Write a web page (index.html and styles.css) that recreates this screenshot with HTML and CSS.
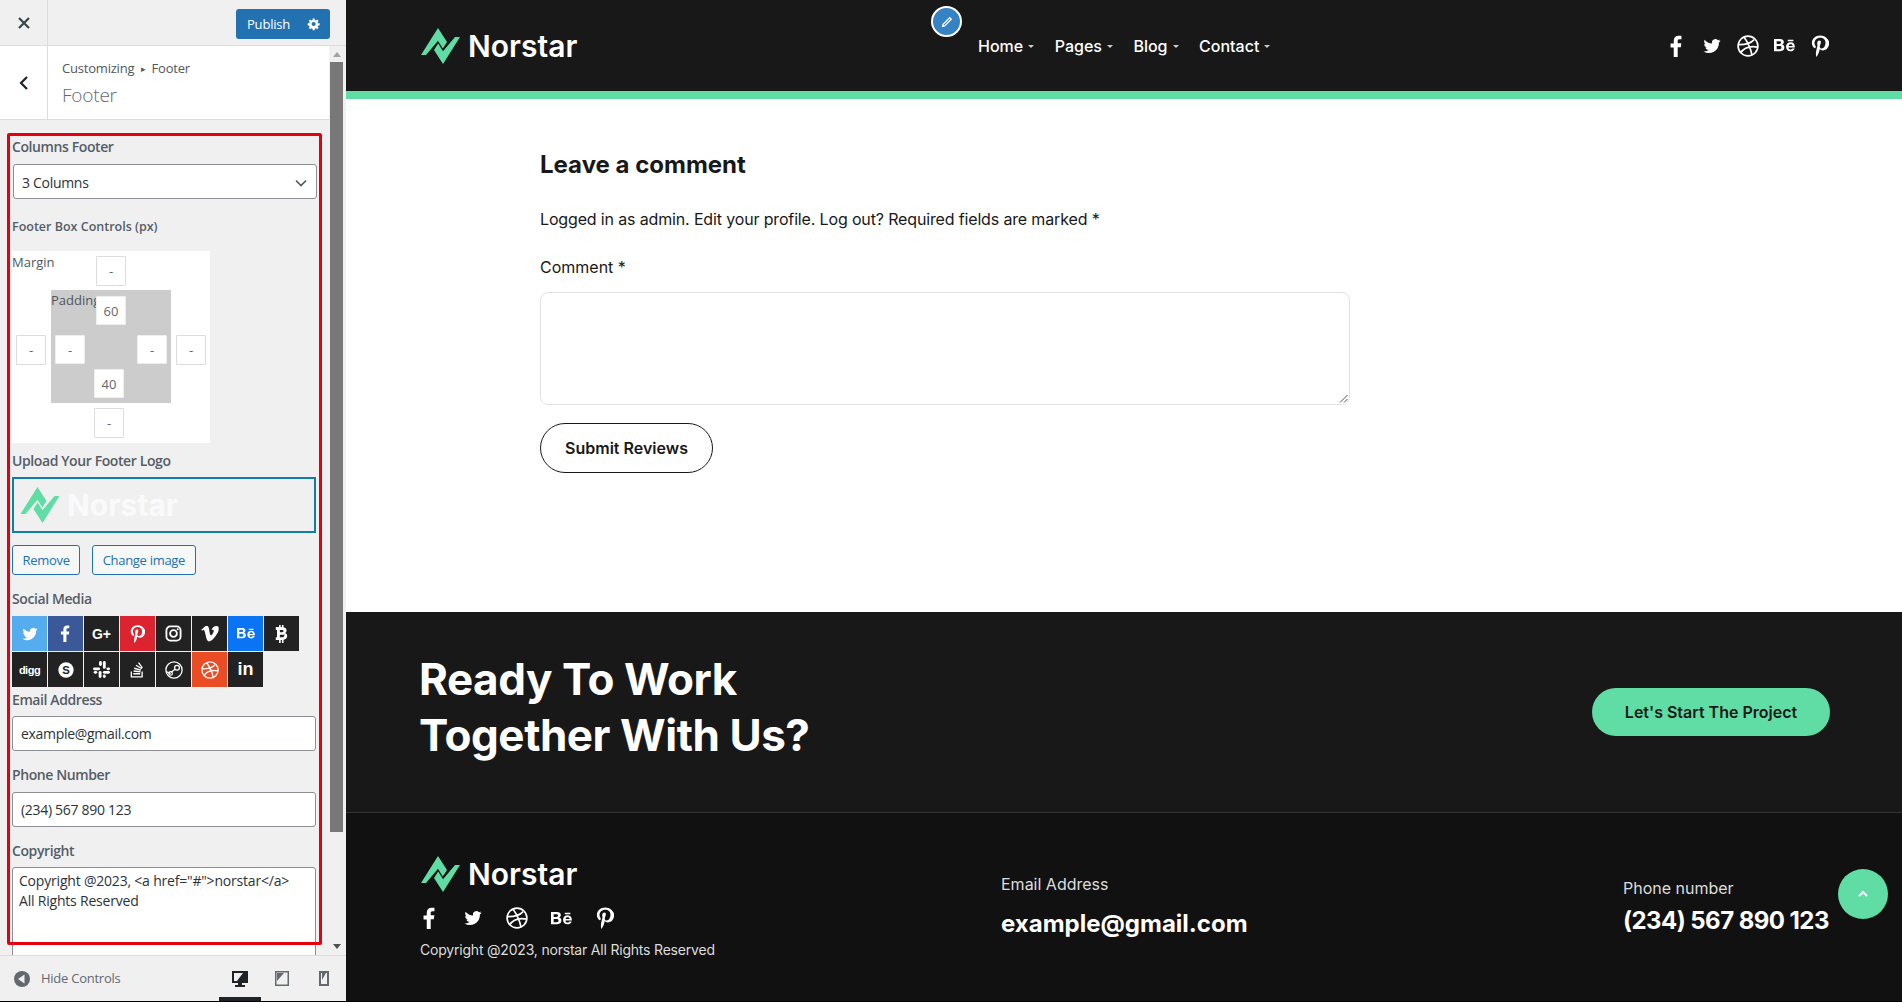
FILE: index.html
```html
<!DOCTYPE html>
<html lang="en">
<head>
<meta charset="utf-8">
<title>Customizing Footer</title>
<link rel="stylesheet" href="styles.css">
</head>
<body>
<svg class="defs" width="0" height="0" aria-hidden="true">
  <defs>
    <symbol id="i-logo" viewBox="0 0 39 36">
      <path fill="#5fdda5" d="M0 27 17 0l9 14-4.200 6.500-4.800-7.700L5 27z"/>
      <path fill="#5fdda5" d="M39 9 22 36l-9-14 4.200-6.500 4.800 7.700L34 9z"/>
    </symbol>
    <symbol id="i-fb" viewBox="0 0 20 24"><path d="M7 24V13.500H3.500V9.300H7V6.200C7 2.500 9.200.8 12.300.8c1.500 0 2.700.1 3.100.2v3.700h-2.100c-1.700 0-2 .8-2 2v2.400h4l-.6 4.200h-3.400V24z"/></symbol>
    <symbol id="i-tw" viewBox="0 0 24 24"><path d="M23.500 5c-.8.4-1.700.6-2.700.8 1-.6 1.700-1.500 2.100-2.600-.9.5-1.900.9-3 1.100A4.700 4.700 0 0 0 11.900 8.600C8 8.400 4.500 6.500 2.200 3.600c-1.200 2.100-.6 4.800 1.400 6.200-.8 0-1.500-.2-2.100-.6 0 2.300 1.600 4.200 3.800 4.700-.7.200-1.400.2-2.100.1.600 1.900 2.300 3.200 4.400 3.300A9.500 9.500 0 0 1 .6 19.200 13.400 13.400 0 0 0 21.200 7.300c.9-.6 1.700-1.400 2.300-2.300z"/></symbol>
    <symbol id="i-dr" viewBox="0 0 24 24"><g fill="none" stroke="currentColor" stroke-width="1.800"><circle cx="12" cy="12" r="10.800"/><path d="M7.500 2.300c3.500 4.600 7 11 9 20M1.400 10.500c6.500.2 13-.8 17.300-5.500M3.800 19.700c3.400-5.500 9-8.400 19-6.500"/></g></symbol>
    <symbol id="i-be" viewBox="0 0 26 18"><path fill-rule="evenodd" d="M0 1h7.400c3 0 4.800 1.400 4.800 3.800 0 1.500-.8 2.600-2 3.100 1.700.5 2.700 1.800 2.700 3.700 0 2.800-2.100 4.400-5.200 4.400H0zm3.300 2.700v3.300h3.500c1.200 0 1.900-.6 1.900-1.700S8 3.700 6.800 3.700zm0 5.800v4.100h3.800c1.400 0 2.200-.8 2.200-2.100s-.8-2-2.200-2zM17 2h7v1.600h-7zm3.700 3c3.500 0 5.300 2.600 5.100 6.400H17.900c.1 1.700 1 2.600 2.600 2.600 1.100 0 1.900-.5 2.200-1.300h2.900c-.7 2.200-2.600 3.500-5.100 3.500-3.500 0-5.600-2.300-5.600-5.600S17.200 5 20.700 5zm0 2.300c-1.500 0-2.500.8-2.700 2.300h5.100c-.1-1.500-1-2.300-2.400-2.300z"/></symbol>
    <symbol id="i-pi" viewBox="0 0 20 24"><path d="M10.400.3C4.700.3 1 4 1 8.600c0 2.500 1.400 5 3.200 5.900.5.200.7-.1.800-.5l.3-1.200c0-.3 0-.5-.2-.8-.7-.9-1.200-2.100-1.200-3.400 0-3.200 2.600-5.900 6.300-5.900 3.600 0 5.900 2.300 5.900 5.500 0 3.600-1.700 6.600-4.200 6.600-1.400 0-2.400-1.100-2.100-2.500.4-1.600 1.200-3.300 1.200-4.400 0-1-.6-1.900-1.700-1.900-1.300 0-2.400 1.400-2.400 3.200 0 1.200.4 2 .4 2s-1.400 5.700-1.600 6.800c-.5 2-.1 4.600 0 5.600.1.300.4.300.6.100.2-.3 2-2.600 2.600-5l.9-3.400c.5.900 1.800 1.600 3.300 1.600 4.300 0 7.200-3.900 7.200-9.200C19 3.900 15.400.3 10.400.3z"/></symbol>
  </defs>
</svg>

<aside class="sidebar">
  <div class="topbar">
    <button class="close-btn" aria-label="Close">
      <svg width="16" height="16" viewBox="0 0 16 16"><path d="M3 3l10 10M13 3L3 13" stroke="#3c434a" stroke-width="2.200"/></svg>
    </button>
    <div class="publish">
      <span class="publish-text">Publish</span>
      <svg width="14" height="14" viewBox="0 0 20 20"><path fill="#fff" fill-rule="evenodd" d="M18 12h-2.180c-.17.7-.44 1.350-.81 1.930l1.540 1.540-2.100 2.100-1.540-1.540c-.58.36-1.230.64-1.910.81V19H8v-2.180c-.68-.17-1.330-.45-1.910-.81l-1.540 1.540-2.120-2.120 1.540-1.540c-.36-.58-.64-1.230-.81-1.890H1V9h2.180c.17-.7.45-1.350.81-1.930L2.450 5.530l2.100-2.100 1.540 1.540c.58-.37 1.230-.64 1.910-.81V2h3v2.160c.68.17 1.330.44 1.910.81l1.540-1.540 2.120 2.120-1.540 1.540c.36.58.64 1.230.81 1.910H18zM9.500 13a3 3 0 1 0 0-6 3 3 0 0 0 0 6z"/></svg>
    </div>
  </div>

  <div class="section-head">
    <button class="back-btn" aria-label="Back">
      <svg width="12" height="16" viewBox="0 0 12 16"><path d="M9 2 3 8l6 6" fill="none" stroke="#1d2327" stroke-width="2.200"/></svg>
    </button>
    <div class="section-title">
      <div class="crumb">Customizing <span class="crumb-arrow">▸</span> Footer</div>
      <div class="title">Footer</div>
    </div>
  </div>

  <div class="scroll-area">
    <div class="controls">
      <div class="label lab-columns">Columns Footer</div>
      <div class="select"><span>3 Columns</span>
        <svg width="14" height="14" viewBox="0 0 14 14"><path d="M2 4.500 7 9.500l5-5" fill="none" stroke="#50575e" stroke-width="1.600"/></svg>
      </div>
      <div class="label lab-box">Footer Box Controls (px)</div>
      <div class="box-ctl">
        <span class="box-label margin-label">Margin</span>
        <div class="pad-area"><span class="box-label padding-label">Padding</span></div>
        <span class="num m-top">-</span>
        <span class="num m-left">-</span>
        <span class="num m-right">-</span>
        <span class="num m-bottom">-</span>
        <span class="num p p-top">60</span>
        <span class="num p p-left">-</span>
        <span class="num p p-right">-</span>
        <span class="num p p-bottom">40</span>
      </div>
      <div class="label lab-upload">Upload Your Footer Logo</div>
      <div class="logo-thumb">
        <svg class="logo-mark-s" width="40" height="36"><use href="#i-logo"/></svg>
        <span class="logo-ghost">Norstar</span>
      </div>
      <div class="btn-row">
        <span class="wp-btn">Remove</span>
        <span class="wp-btn">Change image</span>
      </div>
      <div class="label lab-social">Social Media</div>
      <div class="social-grid">
        <span class="tile c-tw"><svg width="16" height="16"><use href="#i-tw"/></svg></span>
        <span class="tile c-fb"><svg width="15" height="17"><use href="#i-fb"/></svg></span>
        <span class="tile"><span class="g-plus">G+</span></span>
        <span class="tile c-pi"><svg width="15" height="18"><use href="#i-pi"/></svg></span>
        <span class="tile"><svg width="17" height="17" viewBox="0 0 24 24"><g fill="none" stroke="currentColor" stroke-width="2.600"><rect x="2" y="2" width="20" height="20" rx="5.500"/><circle cx="12" cy="12" r="4.800"/></g><circle cx="18" cy="6" r="1.500" fill="currentColor"/></svg></span>
        <span class="tile"><svg width="18" height="16" viewBox="0 0 24 22"><path d="M23.900 5.200c-.1 2.300-1.700 5.500-4.900 9.600-3.300 4.300-6 6.400-8.300 6.400-1.400 0-2.600-1.300-3.600-3.900L5.200 9.200C4.500 6.600 3.700 5.300 2.900 5.300c-.2 0-.8.400-1.900 1.100L0 5c1.200-1 2.400-2.100 3.500-3.100C5.100.5 6.300-.2 7.100-.3c1.900-.2 3 1.100 3.500 3.900.5 3 .8 4.900 1 5.600.5 2.500 1.100 3.700 1.800 3.700.5 0 1.200-.8 2.200-2.300.9-1.500 1.500-2.700 1.500-3.500.1-1.300-.4-2-1.500-2-.5 0-1.100.1-1.700.4C15.600 1.700 18 -.1 21.400 0c2.600.1 2.700 2.100 2.500 5.200z"/></svg></span>
        <span class="tile c-be"><svg width="18" height="13"><use href="#i-be"/></svg></span>
        <span class="tile"><svg width="13" height="18" viewBox="0 0 16 22"><path fill-rule="evenodd" d="M5 0h2v2.500h1.500V0h2v2.800c2.300.5 3.700 1.800 3.700 3.900 0 1.500-.7 2.600-1.900 3.200 1.700.5 2.700 1.800 2.700 3.700 0 2.600-1.700 4.100-4.500 4.500V22h-2v-3.500H7V22H5v-3.500H1V15h1.500V6H1V2.500h4zm1 6v2.800h3c1 0 1.500-.5 1.500-1.400S10 6 9 6zm0 6v3h3.400c1 0 1.600-.6 1.600-1.500S13.400 12 12.400 12z"/></svg></span>
        <span class="tile"><span class="digg">digg</span></span>
        <span class="tile"><svg width="16" height="16" viewBox="0 0 24 24"><circle cx="12" cy="12" r="11.500"/><text x="12" y="18" class="skype-s">S</text></svg></span>
        <span class="tile"><svg width="17" height="17" viewBox="0 0 24 24"><g><rect x="0" y="9" width="10" height="4" rx="2"/><rect x="8.500" y="0" width="4" height="7" rx="2"/><rect x="14" y="0" width="4" height="11" rx="2"/><rect x="19" y="9" width="5" height="4" rx="2"/><rect x="14" y="14" width="10" height="4" rx="2"/><rect x="14" y="19" width="4" height="5" rx="2"/><rect x="8" y="14" width="4" height="10" rx="2"/><rect x="1" y="14" width="5" height="4" rx="2"/></g></svg></span>
        <span class="tile"><svg width="15" height="17" viewBox="0 0 19 22"><path d="M1.500 13.500v7h14v-7" fill="none" stroke="currentColor" stroke-width="1.700"/><path d="M4 15.500h9v2H4zM4.500 12l9 1-.2 1.800-9-1zM5.500 8.500l8.700 2.500-.5 1.700L5 10.200zM8 4.800l7.600 4.500-.9 1.500L7.100 6.300zM11.500 1.500l5 7-1.400 1-5-7z"/></svg></span>
        <span class="tile"><svg width="18" height="18" viewBox="0 0 24 24"><g fill="none" stroke="currentColor" stroke-width="1.700"><circle cx="12" cy="12" r="10.800"/><circle cx="16" cy="9" r="3.200"/><path d="M1.500 14l6 2.800M8 15l5.500-4"/></g><circle cx="7.500" cy="16.500" r="2.400" fill="none" stroke="currentColor" stroke-width="1.500"/></svg></span>
        <span class="tile c-dr"><svg width="18" height="18"><use href="#i-dr"/></svg></span>
        <span class="tile"><span class="in">in</span></span>
      </div>
      <div class="label lab-email">Email Address</div>
      <div class="input">example@gmail.com</div>
      <div class="label lab-phone">Phone Number</div>
      <div class="input">(234) 567 890 123</div>
      <div class="label lab-copy">Copyright</div>
      <div class="textarea">Copyright @2023, &lt;a href="#"&gt;norstar&lt;/a&gt;<br>All Rights Reserved</div>
    </div>
  </div>
  <div class="scrollbar">
    <span class="arrow-up"></span>
    <span class="thumb"></span>
    <span class="arrow-down"></span>
  </div>
  <div class="red-outline"></div>

  <div class="bottombar">
    <span class="collapse-ico"><svg width="16" height="16" viewBox="0 0 16 16"><circle cx="8" cy="8" r="8" fill="#646970"/><path d="M10.500 3.500v9L4 8z" fill="#f0f0f1"/></svg></span>
    <span class="hide-text">Hide Controls</span>
    <span class="devices">
      <span class="device active"><svg width="18" height="18" viewBox="0 0 18 18"><path fill="#1d2327" fill-rule="evenodd" d="M1 1h16v12H11v2h3v2H4v-2h3v-2H1zm2 2v8h3l6-8z"/></svg></span>
      <span class="device"><svg width="16" height="18" viewBox="0 0 16 18"><path fill="#646970" fill-rule="evenodd" d="M1 1h14v15H1zm1.500 1.500v12h11v-12zM3 3h7l-7 8z"/></svg></span>
      <span class="device"><svg width="12" height="18" viewBox="0 0 12 18"><path fill="#646970" fill-rule="evenodd" d="M1 1h10v15H1zm2 2v11h6V3zM4 3h4l-4 7z"/></svg></span>
    </span>
  </div>
</aside>

<main class="preview">
  <span class="edit-pin"><svg width="14" height="14" viewBox="0 0 20 20"><path fill="#fff" fill-rule="evenodd" d="M13.900 2.600l3.500 3.500L7 16.500 2.500 17.500 3.500 13zM13.900 5l-8.800 8.900.9 1 8.900-8.900z"/></svg></span>
  <header class="site-header">
    <div class="logo">
      <svg width="39" height="36"><use href="#i-logo"/></svg>
      <span class="logo-text">Norstar</span>
    </div>
    <nav class="nav">
      <span class="nav-item">Home<i class="caret"></i></span>
      <span class="nav-item">Pages<i class="caret"></i></span>
      <span class="nav-item">Blog<i class="caret"></i></span>
      <span class="nav-item">Contact<i class="caret"></i></span>
    </nav>
    <div class="socials head-socials">
      <span class="soc"><svg width="19" height="22"><use href="#i-fb"/></svg></span>
      <span class="soc"><svg width="18" height="18"><use href="#i-tw"/></svg></span>
      <span class="soc"><svg width="22" height="22"><use href="#i-dr"/></svg></span>
      <span class="soc"><svg width="21" height="15"><use href="#i-be"/></svg></span>
      <span class="soc"><svg width="18" height="22"><use href="#i-pi"/></svg></span>
    </div>
  </header>

  <section class="comment">
    <h2 class="comment-title">Leave a comment</h2>
    <p class="logged">Logged in as admin. Edit your profile. Log out? Required fields are marked *</p>
    <p class="comment-label">Comment *</p>
    <div class="comment-box"><svg class="grip" width="9" height="9" viewBox="0 0 9 9"><path d="M8.500 1 1 8.500M8.500 5 5 8.500" stroke="#555" stroke-width="1"/></svg></div>
    <span class="submit">Submit Reviews</span>
  </section>

  <section class="cta">
    <h2 class="cta-title">Ready To Work<br>Together With Us?</h2>
    <span class="cta-btn">Let's Start The Project</span>
  </section>

  <footer class="site-footer">
    <div class="foot-brand">
      <div class="logo">
        <svg width="39" height="36"><use href="#i-logo"/></svg>
        <span class="logo-text">Norstar</span>
      </div>
      <div class="socials foot-socials">
        <span class="soc"><svg width="19" height="22"><use href="#i-fb"/></svg></span>
        <span class="soc"><svg width="18" height="18"><use href="#i-tw"/></svg></span>
        <span class="soc"><svg width="22" height="22"><use href="#i-dr"/></svg></span>
        <span class="soc"><svg width="21" height="15"><use href="#i-be"/></svg></span>
        <span class="soc"><svg width="18" height="22"><use href="#i-pi"/></svg></span>
      </div>
      <p class="copyright">Copyright @2023, norstar All Rights Reserved</p>
    </div>
    <div class="foot-email">
      <p class="foot-label">Email Address</p>
      <p class="foot-value">example@gmail.com</p>
    </div>
    <div class="foot-phone">
      <p class="foot-label">Phone number</p>
      <p class="foot-value phone-value">(234) 567 890 123</p>
    </div>
  </footer>
  <span class="to-top"><svg width="12" height="8" viewBox="0 0 12 8"><path d="M2 6l4-4 4 4" fill="none" stroke="#fff" stroke-width="2"/></svg></span>
</main>
</body>
</html>
```
FILE: styles.css
```css
* { box-sizing: border-box; }
html, body { margin: 0; padding: 0; height: 100%; overflow: hidden; }
body {
  display: flex;
  height: 1002px;
  border-bottom: 1px solid #000;
  font-family: "Inter", "Liberation Sans", sans-serif;
  background: #fff;
}
.defs { position: absolute; }
svg { display: block; fill: currentColor; }
p, h2 { margin: 0; }
button { border: 0; padding: 0; background: none; }

/* Sidebar */
.sidebar {
  position: relative;
  width: 346px;
  flex: none;
  height: 100%;
  display: flex;
  flex-direction: column;
  background: #f0f0f1;
  font-family: "Open Sans", "Liberation Sans", sans-serif;
  color: #50575e;
}
.topbar {
  height: 46px;
  flex: none;
  display: flex;
  align-items: flex-start;
  justify-content: space-between;
  padding-right: 16px;
  border-bottom: 1px solid #dcdcde;
}
.close-btn {
  width: 48px;
  height: 45px;
  display: flex;
  align-items: center;
  justify-content: center;
  border-right: 1px solid #dcdcde;
}
.publish {
  width: 94px;
  height: 30px;
  margin-top: 9px;
  border-radius: 3px;
  background: #2271b1;
  color: #fff;
  display: flex;
  align-items: center;
  justify-content: space-between;
  padding: 0 9px 0 11px;
  font-size: 13px;
  letter-spacing: -.2px;
}
.section-head {
  height: 74px;
  flex: none;
  display: flex;
  width: 329px;
  background: #fff;
  border-bottom: 1px solid #dcdcde;
}
.back-btn {
  width: 48px;
  display: flex;
  align-items: center;
  justify-content: center;
  border-right: 1px solid #dcdcde;
}
.section-title { padding: 12px 0 0 14px; }
.crumb { font-size: 13px; line-height: 20px; color: #50575e; letter-spacing: -.2px; }
.crumb-arrow { font-size: 9px; margin: 0 3px; vertical-align: 1px; }
.title { font-size: 19px; font-weight: 300; line-height: 30px; margin-top: 1px; color: #646970; letter-spacing: -.2px; }

.scroll-area {
  flex: 1;
  min-height: 0;
  overflow: hidden;
}
.controls { width: 328px; padding: 0 0 0 12px; }
.label { font-weight: 600; line-height: 18px; color: #555d66; font-size: 14px; letter-spacing: -.4px; }
.lab-columns { margin-top: 18px; }
.lab-box { margin-top: 19px; font-size: 12.500px; letter-spacing: 0; }
.lab-upload { margin-top: 9px; }
.lab-social { margin-top: 15px; }
.lab-email { margin-top: 4px; }
.lab-phone { margin-top: 15px; }
.lab-copy { margin-top: 15px; }
.select {
  width: 304px;
  height: 35px;
  margin: 8px 0 0 1px;
  background: #fff;
  border: 1px solid #8c8f94;
  border-radius: 3px;
  display: flex;
  align-items: center;
  justify-content: space-between;
  padding: 2px 8px 0;
  font-size: 14px;
  letter-spacing: -.3px;
  color: #2c3338;
}
.box-ctl {
  position: relative;
  width: 198px;
  height: 192px;
  margin-top: 15px;
  background: #fff;
  font-size: 13px;
  color: #50575e;
}
.box-label { position: absolute; font-size: 13px; line-height: 16px; }
.margin-label { left: 0; top: 3px; }
.padding-label { left: 0; top: 2px; }
.pad-area {
  position: absolute;
  left: 39px;
  top: 39px;
  width: 120px;
  height: 113px;
  background: #ccc;
}
.num {
  position: absolute;
  width: 30px;
  height: 30px;
  display: flex;
  align-items: center;
  justify-content: center;
  background: #fff;
  border: 1px solid #ddd;
  border-radius: 1px;
  font-size: 13px;
  color: #666;
}
.num.p { height: 29px; border-color: #eee; }
.m-top { left: 84px; top: 5px; }
.m-left { left: 4px; top: 84px; }
.m-right { left: 164px; top: 84px; }
.m-bottom { left: 82px; top: 157px; }
.p-top { left: 84px; top: 45px; }
.p-left { left: 43px; top: 84px; }
.p-right { left: 125px; top: 84px; }
.p-bottom { left: 82px; top: 118px; }
.logo-thumb {
  width: 304px;
  height: 56px;
  margin-top: 7px;
  border: 2px solid #0e7fa5;
  display: flex;
  align-items: center;
  padding-left: 6px;
  gap: 7px;
}
.logo-ghost { font-family: "Inter", sans-serif; font-size: 30px; font-weight: 700; color: #fafafa; }
.btn-row { display: flex; gap: 12px; margin-top: 12px; }
.wp-btn {
  height: 30px;
  padding: 0 9.500px;
  display: flex;
  align-items: center;
  background: #f6f7f7;
  border: 1px solid #2271b1;
  border-radius: 3px;
  color: #2271b1;
  font-size: 13px;
  letter-spacing: -.3px;
}
.social-grid {
  display: grid;
  grid-template-columns: repeat(8, 35px);
  grid-auto-rows: 35px;
  gap: 1px;
  margin-top: 8px;
}
.tile {
  background: #222;
  color: #fff;
  display: flex;
  align-items: center;
  justify-content: center;
}
.c-tw { background: #55acee; }
.c-fb { background: #3b5998; }
.c-pi { background: #dc2430; }
.c-be { background: #0a74f5; }
.c-dr { background: #ea4c24; }
.g-plus { font-family: "Liberation Sans", sans-serif; font-weight: 700; font-size: 14px; }
.digg { font-family: "Liberation Sans", sans-serif; font-weight: 700; font-size: 11px; letter-spacing: -.5px; }
.in { font-family: "Liberation Sans", sans-serif; font-weight: 700; font-size: 18px; }
.skype-s { font-family: "Liberation Sans", sans-serif; font-weight: 700; font-size: 17px; fill: #222; text-anchor: middle; }
.input {
  width: 304px;
  height: 35px;
  margin-top: 7px;
  padding: 0 8px;
  display: flex;
  align-items: center;
  background: #fff;
  border: 1px solid #8c8f94;
  border-radius: 3px;
  font-size: 14px;
  letter-spacing: -.3px;
  color: #2c3338;
}
.lab-phone + .input { margin-top: 8px; }
.textarea {
  width: 304px;
  height: 120px;
  margin-top: 7px;
  padding: 3px 6px;
  background: #fff;
  border: 1px solid #8c8f94;
  border-radius: 3px;
  font-size: 14px;
  line-height: 20px;
  letter-spacing: -.2px;
  color: #2c3338;
}
.scrollbar {
  position: absolute;
  left: 329px;
  top: 46px;
  bottom: 47px;
  width: 17px;
  background: #f0f0f1;
}
.thumb {
  position: absolute;
  left: 1px;
  top: 16px;
  width: 13px;
  height: 770px;
  background: #787878;
}
.arrow-up, .arrow-down {
  position: absolute;
  left: 4px;
  width: 0;
  height: 0;
  border-left: 4px solid transparent;
  border-right: 4px solid transparent;
}
.arrow-up { top: 6px; border-bottom: 5px solid #a3a3a3; }
.arrow-down { bottom: 5px; border-top: 5px solid #505050; }
.red-outline {
  position: absolute;
  left: 7px;
  top: 133px;
  width: 315px;
  height: 812px;
  border: 3px solid #e4000f;
  border-radius: 2px;
  pointer-events: none;
}
.bottombar {
  height: 46px;
  flex: none;
  display: flex;
  align-items: center;
  padding-left: 14px;
  border-top: 1px solid #dcdcde;
  background: #f0f0f1;
  position: relative;
}
.hide-text { font-size: 13px; color: #646970; margin-left: 11px; letter-spacing: -.25px; padding-bottom: 2px; }
.devices { display: flex; margin-left: auto; align-self: stretch; padding-right: 1px; }
.device {
  width: 42px;
  display: flex;
  align-items: center;
  justify-content: center;
}
.device.active { box-shadow: inset 0 -4px 0 #1d2327; }

/* Preview */
.preview {
  position: relative;
  flex: 1;
  min-width: 0;
  display: flex;
  flex-direction: column;
  color: #181818;
}
.edit-pin {
  position: absolute;
  left: 585px;
  top: 6px;
  width: 31px;
  height: 31px;
  border-radius: 50%;
  background: #3582c4;
  border: 2px solid #fff;
  display: flex;
  align-items: center;
  justify-content: center;
}
.site-header {
  height: 99px;
  flex: none;
  background: #181818;
  border-bottom: 8px solid #5fdda5;
  display: grid;
  grid-template-columns: 557px 1fr auto;
  align-items: center;
  padding: 0 64px 0 75px;
  color: #fff;
}
.logo { display: flex; align-items: center; gap: 8px; }
.logo-text { font-size: 30px; font-weight: 600; color: #fff; line-height: 36px; }
.nav { display: flex; gap: 20.500px; padding-top: 1px; }
.nav-item { font-size: 16px; font-weight: 500; display: flex; align-items: center; }
.caret { width: 0; height: 0; margin-left: 5px; border: 3px solid transparent; border-top: 3px solid #ccc; border-bottom: 0; }
.socials { display: flex; align-items: center; color: #fff; }
.soc { display: flex; align-items: center; justify-content: center; width: 36px; }
.foot-socials .soc { width: 44px; }
.comment { height: 513px; flex: none; padding: 50px 0 0 194px; }
.comment-title { font-size: 24px; font-weight: 700; line-height: 32px; }
.logged { font-size: 16px; line-height: 24px; margin-top: 26px; letter-spacing: -.15px; }
.comment-label { font-size: 16px; line-height: 24px; margin-top: 24px; }
.comment-box {
  position: relative;
  width: 810px;
  height: 113px;
  margin-top: 13px;
  border: 1px solid #e2e2e2;
  border-radius: 8px;
}
.grip { position: absolute; right: 1px; bottom: 1px; }
.submit {
  display: inline-flex;
  align-items: center;
  justify-content: center;
  width: 173px;
  height: 50px;
  margin-top: 18px;
  border: 1px solid #181818;
  border-radius: 25px;
  font-size: 16px;
  font-weight: 600;
}
.cta {
  height: 201px;
  flex: none;
  background: #181818;
  border-bottom: 1px solid #333;
  display: flex;
  align-items: center;
  justify-content: space-between;
  padding: 0 72px 0 73px;
  color: #fff;
}
.cta-title { font-size: 44px; font-weight: 700; line-height: 56px; letter-spacing: -.45px; margin-bottom: 10px; }
.cta-btn {
  width: 238px;
  height: 48px;
  display: flex;
  align-items: center;
  justify-content: center;
  background: #5fdda5;
  border-radius: 24px;
  color: #181818;
  font-size: 16px;
  font-weight: 600;
}
.site-footer {
  flex: 1;
  min-height: 0;
  background: #111;
  color: #fff;
  display: grid;
  grid-template-columns: 580px 622px auto;
  padding: 43px 0 0 75px;
}
.foot-socials { margin: 15px 0 0 -14px; }
.copyright { font-size: 14px; line-height: 20px; margin: 11px 0 0 -1px; color: #ddd; letter-spacing: -.2px; white-space: nowrap; }
.foot-email { padding-top: 17px; }
.foot-phone { padding-top: 21px; }
.foot-label { font-size: 16px; line-height: 22px; color: #ddd; }
.foot-email .foot-value { margin-top: 13px; }
.foot-phone .foot-value { margin-top: 6px; }
.foot-value { font-size: 24px; font-weight: 700; line-height: 32px; white-space: nowrap; }
.phone-value { letter-spacing: -.55px; }
.to-top {
  position: absolute;
  right: 14px;
  top: 869px;
  width: 50px;
  height: 50px;
  border-radius: 50%;
  background: #5fdda5;
  display: flex;
  align-items: center;
  justify-content: center;
}
```
